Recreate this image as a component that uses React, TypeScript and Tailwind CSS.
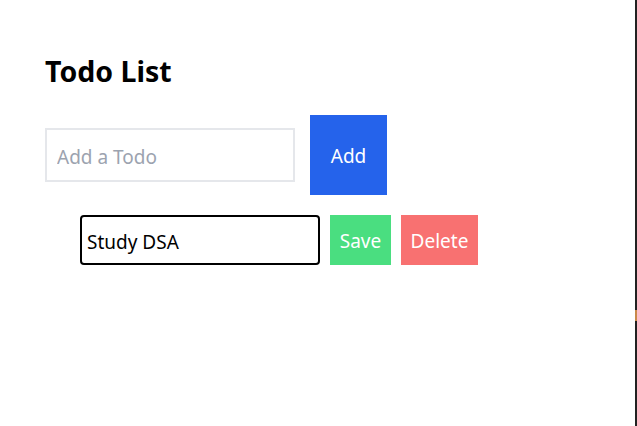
export default function App() {
  return (
    <div className="relative h-[426px] w-[637px] border-r-2 border-[#222] bg-white font-['Noto_Sans',sans-serif]">
      <div className="px-[45px] pt-[51px]">
        <h1 className="text-[28.5px] font-bold leading-[40px] text-black">Todo List</h1>
        <div className="mt-[24px] flex items-center gap-[15px]">
          <input
            className="h-[54px] w-[250px] border-2 border-[#e5e7eb] px-[10px] pt-[3px] text-[19px] outline-none placeholder:text-[#9ca3af]"
            placeholder="Add a Todo"
          />
          <button className="h-[80px] w-[77px] bg-[#2563eb] pt-[3px] text-[19px] text-white">Add</button>
        </div>
        <div className="ml-[35px] mt-[20px] flex items-center gap-[10px]">
          <input
            className="h-[50px] w-[240px] rounded border-2 border-black px-[5px] pt-[3px] text-[19px] text-black outline-none"
            defaultValue="Study DSA"
          />
          <button className="h-[50px] w-[61px] bg-[#4ade80] pt-[3px] text-[19px] text-white">Save</button>
          <button className="h-[50px] w-[77px] bg-[#f87171] pt-[3px] text-[19px] text-white">Delete</button>
        </div>
      </div>
      <div className="absolute right-[-2px] top-[310px] h-[11px] w-[2px] bg-[#c8884a]" />
    </div>
  )
}
